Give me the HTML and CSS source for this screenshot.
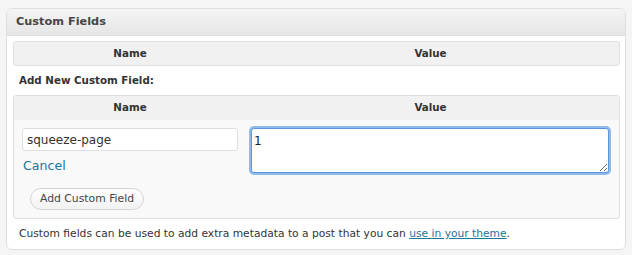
FILE: index.html
```html
<!DOCTYPE html>
<html>
<head>
<meta charset="utf-8">
<link rel="stylesheet" href="styles.css">
</head>
<body>
<div class="postbox">
  <h3 class="hndle">Custom Fields</h3>
  <div class="inside">
    <div class="list-head">
      <div class="col-name">Name</div>
      <div class="col-value">Value</div>
    </div>
    <p class="add-label">Add New Custom Field:</p>
    <div class="newmeta">
      <div class="list-head inner">
        <div class="col-name">Name</div>
        <div class="col-value">Value</div>
      </div>
      <div class="meta-row">
        <div class="cell-left">
          <input class="meta-key" type="text" value="squeeze-page">
          <a class="cancel" href="#">Cancel</a>
        </div>
        <div class="cell-right">
          <textarea class="meta-value">1</textarea>
        </div>
      </div>
      <div class="submit-row">
        <button class="btn" type="button">Add Custom Field</button>
      </div>
    </div>
    <p class="note">Custom fields can be used to add extra metadata to a post that you can <a href="#">use in your theme</a>.</p>
  </div>
</div>
</body>
</html>
```
FILE: styles.css
```css
html, body {
  margin: 0;
  padding: 0;
}
body {
  background: #f5f5f5;
  font-family: "DejaVu Sans", "Liberation Sans", sans-serif;
  color: #333;
  padding: 8px 6px 0 6px;
}
.postbox {
  width: 618px;
  background: #fff;
  border: 1px solid #dfdfdf;
  border-radius: 6px;
  overflow: hidden;
}
.hndle {
  margin: 0;
  height: 26px;
  line-height: 26px;
  padding-left: 9px;
  font-size: 11.3px;
  font-weight: bold;
  color: #464646;
  background: linear-gradient(#f4f4f4, #e6e6e6);
  border-bottom: 1px solid #dfdfdf;
}
.inside {
  padding: 5px 5px 9px 6px;
}
.list-head {
  display: flex;
  height: 23px;
  background: #f1f1f1;
  border: 1px solid #dfdfdf;
  border-radius: 3px;
  font-size: 10.3px;
  font-weight: bold;
  color: #333;
  line-height: 23px;
}
.list-head.inner {
  border: none;
  border-bottom: 1px solid #f1f1f1;
  border-radius: 0;
}
.col-name {
  width: 232px;
  text-align: center;
}
.col-value {
  flex: 1;
  text-align: center;
  padding-right: 4px;
}
.add-label {
  margin: 0;
  height: 29px;
  line-height: 29px;
  padding-left: 6px;
  font-size: 10.3px;
  font-weight: bold;
}
.newmeta {
  background: #f9f9f9;
  border: 1px solid #dfdfdf;
  border-radius: 3px;
  height: 122px;
}
.meta-row {
  display: flex;
  padding-top: 8px;
}
.cell-left {
  width: 232px;
  padding-left: 8px;
  box-sizing: border-box;
  display: flex;
  flex-direction: column;
}
.meta-key {
  width: 216px;
  height: 23px;
  box-sizing: border-box;
  border: 1px solid #dfdfdf;
  border-radius: 3px;
  background: #fff;
  font-family: "DejaVu Sans", sans-serif;
  font-size: 12px;
  color: #333;
  padding: 0 4px;
  margin: 0;
}
.cancel {
  margin-top: 7px;
  padding-left: 1px;
  font-size: 12.6px;
  color: #21759b;
  text-decoration: none;
}
.cell-right {
  flex: 1;
  padding-left: 5px;
  padding-right: 10px;
}
.meta-value {
  display: block;
  width: 358px;
  height: 45px;
  box-sizing: border-box;
  margin: 0;
  border: 1px solid #5d97d8;
  border-radius: 3px;
  box-shadow: 0 0 0 2px #8fbaea;
  outline: none;
  font-family: "DejaVu Sans", sans-serif;
  font-size: 12px;
  color: #222;
  padding: 5px 2px;
  background: #fff;
  resize: vertical;
}
.submit-row {
  padding: 14px 0 0 16px;
}
.btn {
  height: 22px;
  padding: 0 9px;
  border: 1px solid #d5d5d5;
  border-radius: 11px;
  background: linear-gradient(#fefefe, #f2f2f2);
  font-family: "DejaVu Sans", sans-serif;
  font-size: 10.8px;
  color: #464646;
}
.note {
  margin: 8px 0 0 6px;
  font-size: 10.7px;
  color: #333;
}
.note a {
  color: #21759b;
}
```
